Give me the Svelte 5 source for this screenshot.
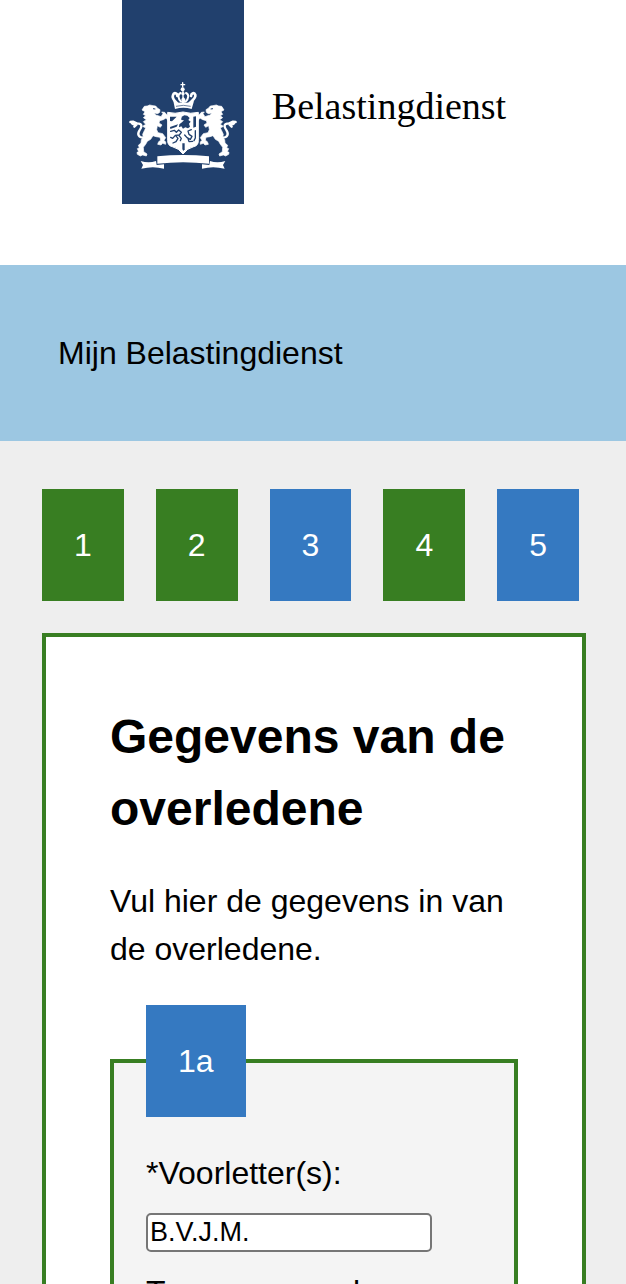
<script>
  const steps = [
    { label: '1', done: true },
    { label: '2', done: true },
    { label: '3', done: false },
    { label: '4', done: true },
    { label: '5', done: false }
  ];

  let initials = $state('B.V.J.M.');
  let infix = $state('');
</script>

<div class="page">
  <header class="logo">
    <div class="ribbon">
      <svg class="emblem" viewBox="27 35 324 266" aria-hidden="true">
        <!-- crown -->
        <g fill="none" stroke="#fff" stroke-width="8" stroke-linecap="round">
          <path d="M183 43H194M188 37V50M189 58V84" stroke-width="4" />
          <path d="M170 98C163 91 155 84 159 74C162 65 172 68 172 77" />
          <path d="M209 98C216 91 228 84 226 74C223 65 214 68 213 77" />
          <path d="M183 94C174 84 172 72 182 68M197 94C206 84 208 72 198 68" stroke-width="6" />
        </g>
        <g fill="#fff">
          <circle cx="188" cy="57" r="6" />
          <circle cx="189" cy="70" r="5" />
          <path d="M184 86L190 80L196 86L194 100H186Z" />
          <path d="M160 92C175 100 205 100 222 92L215 116Q190 109 165 116Z" />
        </g>
        <path d="M168 108Q190 102 212 108" fill="none" stroke="#21406d" stroke-width="2" />

        <!-- lion, mirrored for the right side -->
        {#snippet lion()}
          <path
            fill="#fff"
            stroke="#fff"
            stroke-width="2"
            stroke-linejoin="round"
            d="M66 119L73 108L82 107L89 104L99 106L107 107L113 114L120 118L119 126L113 130L103 128L107 134L117 137L123 139L129 130L125 125L134 126L148 142L146 153L138 143L130 148L119 151L117 158L126 164L121 171L112 166L110 178L114 187L128 190L137 202L132 210L137 215L137 222L128 219L123 224L113 222L116 214L122 210L120 201L108 199L99 196L92 207L82 213L77 222L70 231L71 244L81 251L79 257L68 254L61 257L52 252L51 246L56 244L52 235L58 232L55 225L63 218L64 208L70 201L68 192L73 181L77 173L68 168L77 162L70 154L79 148L70 142L77 136L70 132L75 124Z"
          />
          <path
            fill="none"
            stroke="#fff"
            stroke-width="7"
            stroke-linecap="round"
            stroke-linejoin="round"
            d="M70 202C56 202 51 192 58 181C66 170 67 162 57 160C47 158 44 166 36 159M50 159L39 154L31 155M50 162L43 169"
          />
          <path fill="none" stroke="#21406d" stroke-width="3" d="M99 115L106 116" />
        {/snippet}
        <g>{@render lion()}</g>
        <g transform="translate(378 0) scale(-1 1)">{@render lion()}</g>

        <!-- shield -->
        <path
          fill="#fff"
          stroke="#fff"
          stroke-width="3"
          d="M143 126Q165 132 189 125Q212 132 235 126V211Q235 226 221 229Q201 234 189 251Q177 234 157 229Q143 226 143 211Z"
        />
        <g fill="#21406d">
          <path
            d="M184 140L193 135L202 136L209 143L205 149L212 154L207 160L210 169L204 174L196 171L189 175L184 168L177 171L178 162L186 156L192 150L184 149Z"
          />
          <path d="M150 139H170L156 153L150 152Z" />
          <path d="M220 139L228 138V169L220 172Z" />
          <path d="M150 170L174 162L170 169L151 176Z" />
          <path d="M187 219H194V237L190 242L187 236Z" />
        </g>
        <g fill="none" stroke="#21406d" stroke-width="4" stroke-linecap="round" stroke-linejoin="round">
          <path d="M152 183L163 180L169 186L176 179L184 186L178 194L166 195L158 204L152 201" />
          <path d="M167 196L174 204L168 214L159 218M177 196L184 204L181 211" />
          <path d="M214 178L204 182L207 192L216 198L211 207L201 202L194 194M204 205L207 214L218 213" />
          <path d="M226 181V203L222 211" />
        </g>
        <path d="M160 162L184 139" stroke="#fff" stroke-width="4" />

        <!-- motto ribbon -->
        <g fill="#fff">
          <path d="M112 258Q189 250 267 258V280Q189 271 112 280Z" />
          <path d="M62 272Q86 279 108 272L110 284L132 282V295Q99 286 64 295L69 284Z" />
          <path d="M316 272Q292 279 270 272L268 284L246 282V295Q279 286 314 295L309 284Z" />
        </g>
      </svg>
    </div>
    <span class="wordmark">Belastingdienst</span>
  </header>

  <div class="band">Mijn Belastingdienst</div>

  <main>
    <nav class="steps" aria-label="Stappen">
      {#each steps as step}
        <a href={`#stap-${step.label}`} class:done={step.done}>{step.label}</a>
      {/each}
    </nav>

    <form class="card">
      <h1>Gegevens van de overledene</h1>
      <p>Vul hier de gegevens in van de overledene.</p>
      <fieldset>
        <legend>1a</legend>
        <div class="field">
          <label for="initials">*Voorletter(s):</label>
          <input id="initials" type="text" bind:value={initials} />
        </div>
        <div class="field">
          <label for="infix">Tussenvoegsel:</label>
          <input id="infix" type="text" bind:value={infix} />
        </div>
      </fieldset>
    </form>
  </main>
</div>

<style>
  :global(body) {
    margin: 0;
    background: #eee;
  }

  :global(html) {
    scrollbar-width: none;
  }

  .page {
    color: #000;
    font: 32px/48px "Liberation Sans", Arial, sans-serif;
  }

  .logo {
    display: flex;
    justify-content: center;
    gap: 28px;
    padding: 0 0 61px 2px;
    background: #fff;
  }

  .ribbon {
    box-sizing: border-box;
    width: 122px;
    height: 204px;
    padding: 82px 7px 0;
    background: #21406d;
  }

  .emblem {
    display: block;
    width: 108px;
  }

  .wordmark {
    padding-top: 82px;
    font-family: "Liberation Serif", serif;
    font-size: 38px;
  }

  .band {
    padding: 64px 58px;
    background: #9cc7e2;
  }

  main {
    padding: 48px 40px 48px 42px;
  }

  .steps {
    display: flex;
    gap: 32px;
    margin-bottom: 32px;
  }

  .steps a,
  legend {
    padding: 32px;
    background: #3579c1;
    color: #fff;
    text-decoration: none;
  }

  .steps a.done {
    background: #387e22;
  }

  .card {
    padding: 64px;
    border: 4px solid #387e22;
    background: #fff;
  }

  h1 {
    margin: 0 0 32px;
    font-size: 48px;
    line-height: 72px;
  }

  p {
    margin: 0 0 32px;
  }

  fieldset {
    min-width: 0;
    margin: 0;
    padding: 32px;
    border: 4px solid #387e22;
    background: #f4f4f4;
  }

  .field {
    display: flex;
    flex-direction: column;
    align-items: flex-start;
    gap: 16px;
    margin-bottom: 16px;
  }

  input {
    box-sizing: border-box;
    width: 286px;
    max-width: 100%;
    height: 39px;
    padding: 2px;
    border: 2px solid #767676;
    border-radius: 5px;
    background: #fff;
    color: #000;
    font: 27px "Liberation Sans", Arial, sans-serif;
  }
</style>
